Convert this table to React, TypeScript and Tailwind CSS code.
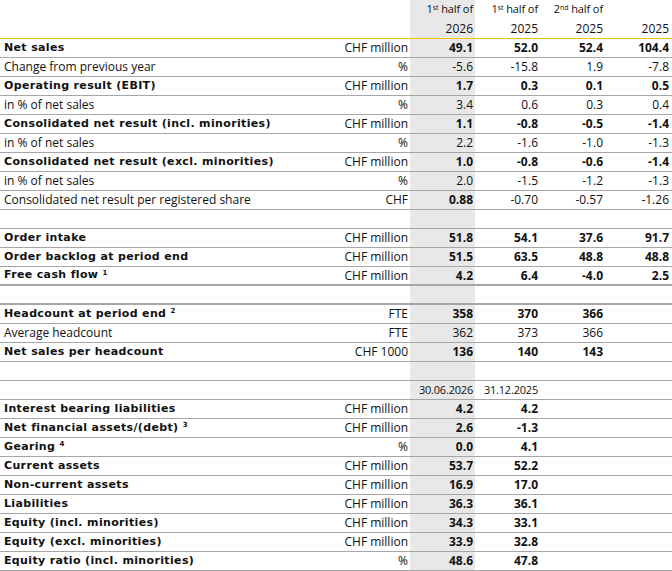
type Row = {
  label?: string;
  sup?: string;
  unit?: string;
  vals?: string[];
  bold?: boolean;
  boldFirst?: boolean;
  thick?: boolean;
  small?: boolean;
};

const rows: Row[] = [
  { label: "Net sales", unit: "CHF million", vals: ["49.1", "52.0", "52.4", "104.4"], bold: true },
  { label: "Change from previous year", unit: "%", vals: ["-5.6", "-15.8", "1.9", "-7.8"] },
  { label: "Operating result (EBIT)", unit: "CHF million", vals: ["1.7", "0.3", "0.1", "0.5"], bold: true },
  { label: "in % of net sales", unit: "%", vals: ["3.4", "0.6", "0.3", "0.4"] },
  { label: "Consolidated net result (incl. minorities)", unit: "CHF million", vals: ["1.1", "-0.8", "-0.5", "-1.4"], bold: true },
  { label: "in % of net sales", unit: "%", vals: ["2.2", "-1.6", "-1.0", "-1.3"] },
  { label: "Consolidated net result (excl. minorities)", unit: "CHF million", vals: ["1.0", "-0.8", "-0.6", "-1.4"], bold: true },
  { label: "in % of net sales", unit: "%", vals: ["2.0", "-1.5", "-1.2", "-1.3"] },
  { label: "Consolidated net result per registered share", unit: "CHF", vals: ["0.88", "-0.70", "-0.57", "-1.26"], boldFirst: true },
  {},
  { label: "Order intake", unit: "CHF million", vals: ["51.8", "54.1", "37.6", "91.7"], bold: true },
  { label: "Order backlog at period end", unit: "CHF million", vals: ["51.5", "63.5", "48.8", "48.8"], bold: true },
  { label: "Free cash flow", sup: "1", unit: "CHF million", vals: ["4.2", "6.4", "-4.0", "2.5"], bold: true, thick: true },
  { thick: true },
  { label: "Headcount at period end", sup: "2", unit: "FTE", vals: ["358", "370", "366", ""], bold: true },
  { label: "Average headcount", unit: "FTE", vals: ["362", "373", "366", ""] },
  { label: "Net sales per headcount", unit: "CHF 1000", vals: ["136", "140", "143", ""], bold: true },
  {},
  { vals: ["30.06.2026", "31.12.2025", "", ""], small: true },
  { label: "Interest bearing liabilities", unit: "CHF million", vals: ["4.2", "4.2", "", ""], bold: true },
  { label: "Net financial assets/(debt)", sup: "3", unit: "CHF million", vals: ["2.6", "-1.3", "", ""], bold: true },
  { label: "Gearing", sup: "4", unit: "%", vals: ["0.0", "4.1", "", ""], bold: true },
  { label: "Current assets", unit: "CHF million", vals: ["53.7", "52.2", "", ""], bold: true },
  { label: "Non-current assets", unit: "CHF million", vals: ["16.9", "17.0", "", ""], bold: true },
  { label: "Liabilities", unit: "CHF million", vals: ["36.3", "36.1", "", ""], bold: true },
  { label: "Equity (incl. minorities)", unit: "CHF million", vals: ["34.3", "33.1", "", ""], bold: true },
  { label: "Equity (excl. minorities)", unit: "CHF million", vals: ["33.9", "32.8", "", ""], bold: true },
  { label: "Equity ratio (incl. minorities)", unit: "%", vals: ["48.6", "47.8", "", ""], bold: true },
];

const font = "font-['Open_Sans',sans-serif]";
const num = `${font} text-[12px]`;
const lbl = "font-['DejaVu_Sans',Verdana,sans-serif] text-[11px] font-bold tracking-[0.35px]";

function HeadCell({ top, sup, year, gray, wide }: { top?: string; sup?: string; year: string; gray?: boolean; wide?: boolean }) {
  return (
    <div className={`${wide ? "w-[67px] pr-[3px]" : "w-[65px] pr-[2px]"} ${gray ? "bg-[#e8e8e8]" : ""} flex flex-col items-end`}>
      <div className="h-[19px] flex items-center whitespace-nowrap text-[11px] tracking-[-0.1px]">
        {top && (
          <span>
            {top}
            <sup className="text-[7px]">{sup}</sup> half of
          </span>
        )}
      </div>
      <div className="h-[19px] flex items-center text-[12px]">{year}</div>
    </div>
  );
}

function TableRow({ r }: { r: Row }) {
  const border = r.thick ? "border-b-2" : "border-b";
  return (
    <div className={`flex h-[19px] ${border} border-[#a6a6a6] text-[#111]`}>
      <div className="flex-1 pl-1 flex items-center whitespace-nowrap">
        {r.label && (
          <span className={r.bold ? lbl : num}>
            {r.label}
            {r.sup && (
              <>
                {" "}
                <sup className="text-[7px]">{r.sup}</sup>
              </>
            )}
          </span>
        )}
      </div>
      <div className={`w-[70px] pr-[2px] flex items-center justify-end ${num}`}>{r.unit}</div>
      {[0, 1, 2, 3].map((i) => {
        const v = r.vals ? r.vals[i] : "";
        const b = r.bold || (r.boldFirst && i === 0);
        return (
          <div
            key={i}
            className={`${i === 3 ? "w-[67px] pr-[3px]" : "w-[65px] pr-[2px]"} ${i === 0 ? "bg-[#e8e8e8]" : ""} flex items-center justify-end ${font} ${r.small ? "text-[11px] tracking-[-0.2px]" : "text-[12px]"} ${b ? "font-bold" : ""}`}
          >
            {v}
          </div>
        );
      })}
    </div>
  );
}

export default function App() {
  return (
    <div className="w-[672px] h-[571px] bg-white overflow-hidden">
      <div className={`flex h-[39px] border-b border-[#f5c000] text-[#111] ${font}`}>
        <div className="flex-1" />
        <div className="w-[70px]" />
        <HeadCell top="1" sup="st" year="2026" gray />
        <HeadCell top="1" sup="st" year="2025" />
        <HeadCell top="2" sup="nd" year="2025" />
        <HeadCell year="2025" wide />
      </div>
      {rows.map((r, i) => (
        <TableRow key={i} r={r} />
      ))}
    </div>
  );
}
